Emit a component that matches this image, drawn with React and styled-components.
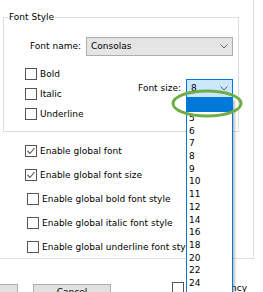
import React from 'react';
import styled, { createGlobalStyle } from 'styled-components';

const Global = createGlobalStyle`
  html, body { margin: 0; padding: 0; background: #fff; }
  body {
    font-family: "DejaVu Sans", Tahoma, sans-serif;
    font-size: 9px;
    line-height: 13px;
    color: #000;
    overflow: hidden;
  }
`;

const Root = styled.div`
  position: relative;
  width: 263px;
  height: 292px;
  overflow: hidden;
  background: #fff;
`;

const Panel = styled.div`
  box-sizing: border-box;
  width: 254px;
  height: 259px;
  border-right: 1px solid #dfdfdf;
  border-bottom: 1px solid #dfdfdf;
  padding: 10px 0 0 3px;
`;

const Group = styled.fieldset`
  box-sizing: border-box;
  width: 236px;
  margin: 0;
  padding: 0 5px 7px 0;
  border: 1px solid #dcdcdc;
  min-inline-size: 0;
`;

const Caption = styled.legend`
  margin-left: 4px;
  padding: 0 1px;
  line-height: 14px;
`;

const FontNameRow = styled.div`
  display: flex;
  justify-content: flex-end;
  align-items: center;
  gap: 5px;
  margin-top: 13px;
`;

const Combo = styled.div`
  box-sizing: border-box;
  width: ${p => p.$width}px;
  height: 19px;
  display: flex;
  align-items: center;
  justify-content: space-between;
  padding: 0 4px 0 4px;
  border: 1px solid ${p => (p.$focused ? '#0078d7' : '#adadad')};
  background: ${p => (p.$focused ? '#cce8ff' : '#e5e5e5')};
`;

const OptionsRow = styled.div`
  display: flex;
  align-items: flex-start;
  margin-top: 8px;
  padding-left: 21px;
`;

const CheckColumn = styled.div`
  display: flex;
  flex-direction: column;
`;

const CheckRow = styled.label`
  display: flex;
  align-items: center;
  gap: 3px;
  height: ${p => p.$h || 20}px;
  padding-left: ${p => p.$indent || 0}px;
  white-space: nowrap;
`;

const Box = styled.span`
  box-sizing: border-box;
  flex: none;
  width: 12px;
  height: 12px;
  border: 1px solid #555;
  background: #fff;
  display: flex;
  align-items: center;
  justify-content: center;
`;

const SizeField = styled.div`
  position: relative;
  margin-left: auto;
  margin-top: 15px;
  display: flex;
  align-items: center;
  gap: 5px;
  height: 19px;
`;

const DropList = styled.div`
  position: absolute;
  top: 100%;
  right: 0;
  width: 47px;
  box-sizing: border-box;
  border: 1px solid #0078d7;
  border-top: none;
  background: #fff;
  box-shadow: 2px 2px 2px rgba(0, 0, 0, 0.25);
  z-index: 3;
`;

const DropItem = styled.div`
  height: ${p => (p.$selected ? 14 : 12.7)}px;
  line-height: ${p => (p.$selected ? 14 : 12.7)}px;
  padding-left: 2px;
  background: ${p => (p.$selected ? '#0078d7' : 'transparent')};
  color: ${p => (p.$selected ? '#fff' : '#000')};
`;

const GlobalList = styled.div`
  display: flex;
  flex-direction: column;
  margin-top: 7px;
  padding-left: 22px;
`;

const BottomBar = styled.div`
  display: flex;
  align-items: flex-start;
  margin-left: -60px;
`;

const Button = styled.button`
  box-sizing: border-box;
  width: 78px;
  height: 23px;
  margin-top: 25px;
  margin-left: ${p => p.$gap || 0}px;
  padding: 1px 0 0;
  border: 1px solid #adadad;
  background: #e1e1e1;
  font: inherit;
  color: #000;
  text-align: center;
  display: flex;
  justify-content: center;
  align-items: flex-start;
  line-height: 13px;
`;

const BottomCheck = styled.div`
  margin-top: 23px;
  margin-left: 61px;
`;

const Annotation = styled.svg`
  position: absolute;
  left: 171px;
  top: 88px;
  width: 72px;
  height: 31px;
  z-index: 5;
  pointer-events: none;
`;

const Chevron = () => (
  <svg width="8" height="5" viewBox="0 0 8 5">
    <polyline points="0.5,0.5 4,4 7.5,0.5" fill="none" stroke="#606060" strokeWidth="1" />
  </svg>
);

const Check = ({ checked, children, indent, h }) => (
  <CheckRow $indent={indent} $h={h}>
    <Box>
      {checked && (
        <svg width="10" height="10" viewBox="0 0 10 10">
          <polyline points="1.5,5 4,7.5 8.5,2" fill="none" stroke="#555" strokeWidth="1.1" />
        </svg>
      )}
    </Box>
    <span>{children}</span>
  </CheckRow>
);

const sizes = ['5', '6', '7', '8', '9', '10', '11', '12', '14', '16', '18', '20', '22', '24', '26', '28', '36'];

export default function App() {
  return (
    <Root>
      <Global />
      <Panel>
        <Group>
          <Caption>Font Style</Caption>
          <FontNameRow>
            <span>Font name:</span>
            <Combo $width={147}>
              <span>Consolas</span>
              <Chevron />
            </Combo>
          </FontNameRow>
          <OptionsRow>
            <CheckColumn>
              <Check>Bold</Check>
              <Check>Italic</Check>
              <Check>Underline</Check>
            </CheckColumn>
            <SizeField>
              <span>Font size:</span>
              <Combo $width={47} $focused>
                <span>8</span>
                <Chevron />
              </Combo>
              <DropList>
                <DropItem $selected>&nbsp;</DropItem>
                {sizes.map(s => (
                  <DropItem key={s}>{s}</DropItem>
                ))}
              </DropList>
            </SizeField>
          </OptionsRow>
        </Group>
        <GlobalList>
          <Check checked h={24}>Enable global font</Check>
          <Check checked h={24}>Enable global font size</Check>
          <Check h={24} indent={2}>Enable global bold font style</Check>
          <Check h={24} indent={2}>Enable global italic font style</Check>
          <Check h={24} indent={2}>Enable global underline font style</Check>
        </GlobalList>
      </Panel>
      <BottomBar>
        <Button>OK</Button>
        <Button $gap={15}>Cancel</Button>
        <BottomCheck>
          <Check h={12}>Transparency</Check>
        </BottomCheck>
      </BottomBar>
      <Annotation viewBox="0 0 72 31">
        <ellipse cx="36" cy="15.5" rx="34" ry="12.5" fill="none" stroke="#70ad47" strokeWidth="3" />
      </Annotation>
    </Root>
  );
}
